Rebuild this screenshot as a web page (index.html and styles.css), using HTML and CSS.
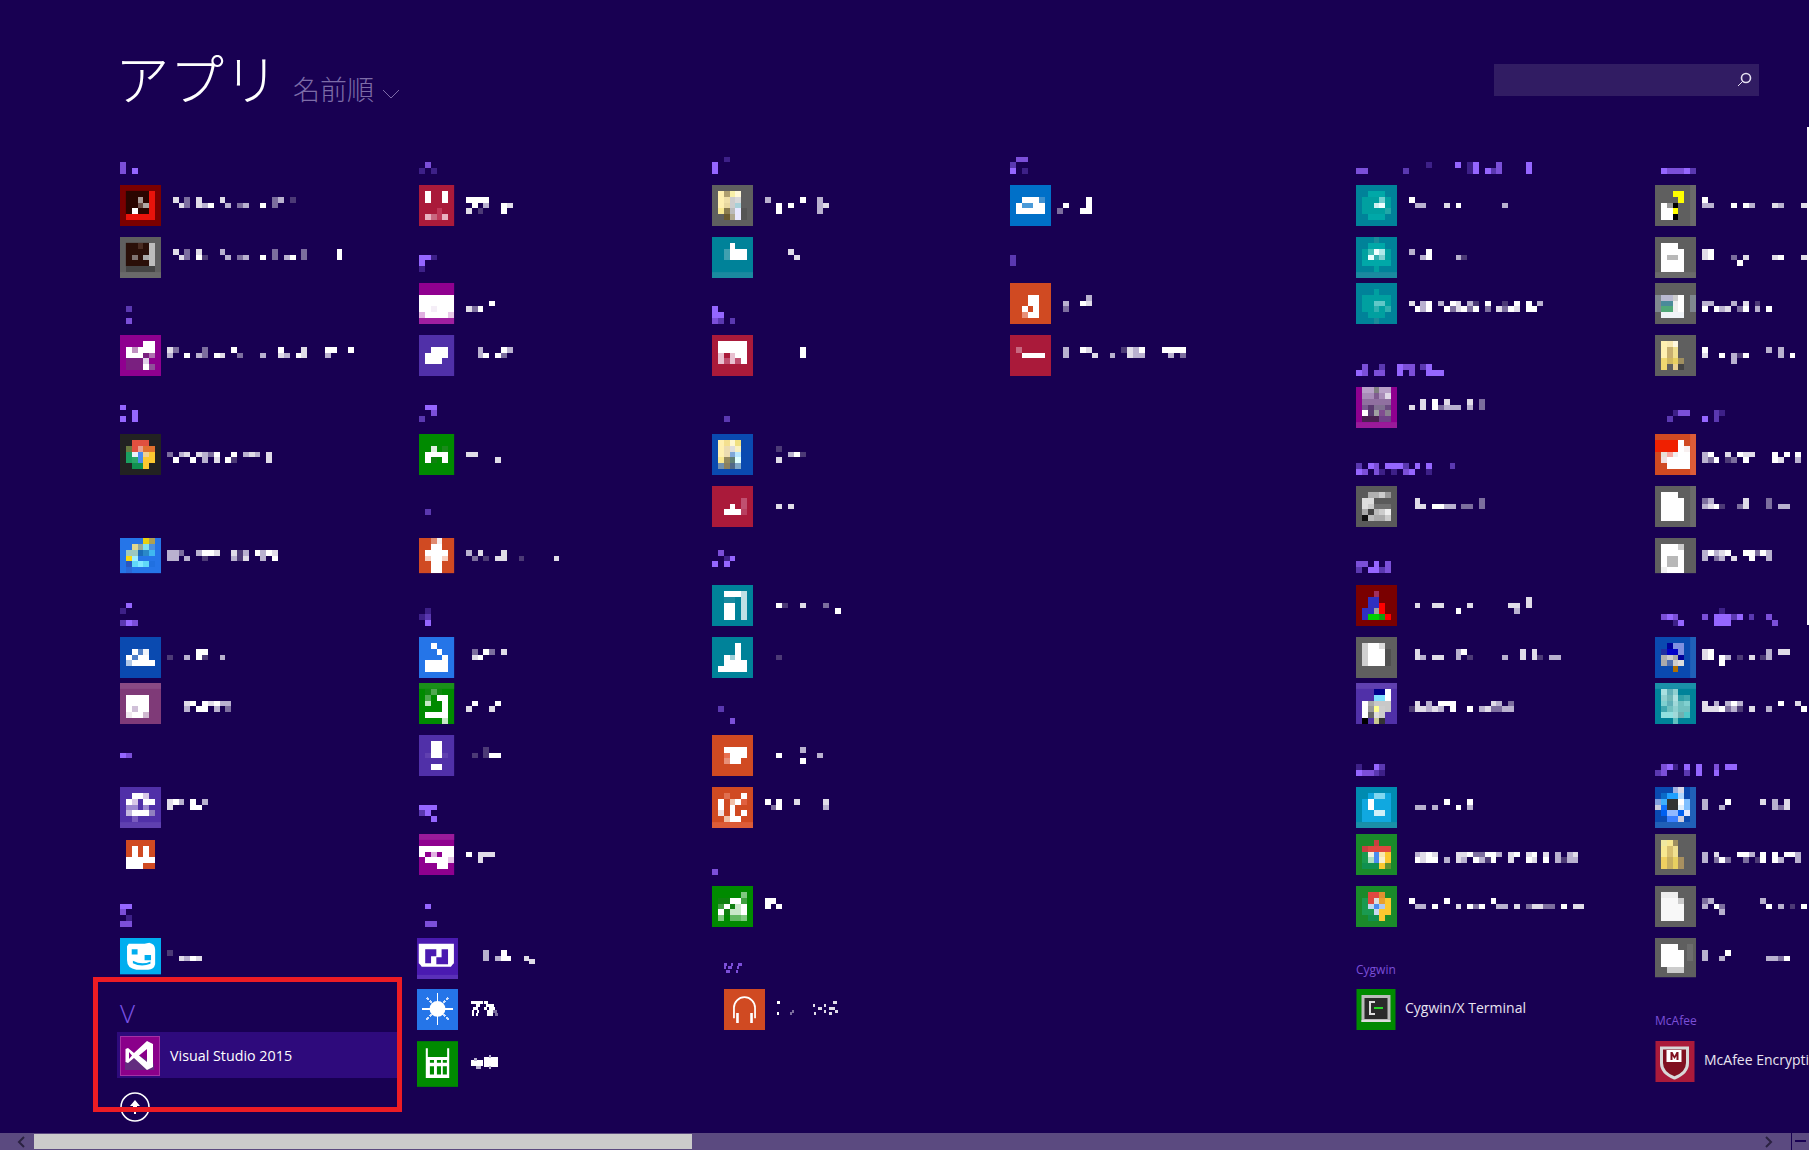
FILE: index.html
```html
<!DOCTYPE html>
<html lang="ja">
<head>
<meta charset="utf-8">
<title>アプリ</title>
<link rel="stylesheet" href="styles.css">
</head>
<body>
<div class="page">
<header class="top">
  <div class="heading">
    <h1 class="title">アプリ</h1>
    <span class="sort">名前順</span>
    <svg class="chev" viewBox="0 0 18 11"><path d="M1 1l8 8 8-8"/></svg>
  </div>
  <div class="search">
    <svg class="glass" viewBox="0 0 16 16"><circle cx="10" cy="6" r="4.5"/><path d="M6.8 9.2L1.5 14.5"/></svg>
  </div>
</header>

<main class="columns">

<!-- column 1 -->
<section class="col">
<svg class="hd" viewBox="0 0 40 7"><path class="h2" d="M0 4.5h1M0 5.5h1"/><path class="h1" d="M2 5.5h1"/></svg>
<div class="app">
  <svg class="tile" viewBox="0 0 7 7"><rect fill="#7a0000" width="7" height="7"/><rect fill="#2a0500" x="1" y="1" width="4" height="4"/><path stroke="#e8130b" d="M5.5 1v5M1 5.5h4"/><path stroke="#a89a96" d="M3 2.5h1"/><path stroke="#6d4f48" d="M3 3.5h1"/><path stroke="#b0a8a5" d="M4 3.5h1"/><path stroke="#fff" d="M2 4.5h1"/></svg>
  <svg class="name" viewBox="0 0 40 7"><path class="w" d="M8 3.5h1M17 3.5h1"/><path class="l" d="M2 2.5h1M3 3.5h1M6 2.5h1M6 3.5h1M10 2.5h1"/><path class="m" d="M7 3.5h1M11 3.5h1M14 3.5h1M20 2.5h1"/><path class="d" d="M4 2.5h1M4 3.5h1M13 3.5h1M19 2.5h1M19 3.5h1"/><path class="k" d="M22 2.5h1"/></svg>
</div>
<div class="app">
  <svg class="tile" viewBox="0 0 7 7"><rect fill="#5f5f5f" width="7" height="7"/><rect fill="#6a6a6a" y="6" width="7" height="1"/><rect fill="#2a0f08" x="1" y="1" width="4" height="4"/><path stroke="#bdbdbd" d="M5.5 1v4"/><path stroke="#444" d="M1 5.5h5"/><path stroke="#4a2c22" d="M3 1.5h1"/><path stroke="#7f7370" d="M2 3.5h1"/><path stroke="#aaa" d="M4 3.5h1"/></svg>
  <svg class="name" viewBox="0 0 40 7"><path class="w" d="M6 3.5h1M17 3.5h1M22 3.5h1M30 2.5h1M30 3.5h1"/><path class="l" d="M2 2.5h1M3 3.5h1M6 2.5h1"/><path class="m" d="M10 2.5h1M11 3.5h1M14 3.5h1M21 3.5h1"/><path class="d" d="M4 2.5h1M4 3.5h1M13 3.5h1M19 2.5h1M19 3.5h1M24 2.5h1M24 3.5h1"/><path class="k" d="M7 3.5h1"/></svg>
</div>
<svg class="hd" viewBox="0 0 40 7"><path class="h3" d="M1 4.5h1"/><path class="h2" d="M1 6.5h1"/></svg>
<div class="app">
  <svg class="tile" viewBox="0 0 7 7"><rect fill="#8f008f" width="7" height="7"/><path stroke="#fff" d="M4 1.5h2M1 2.5h1M3 2.5h3M1 3.5h3M4 5.5h1"/><path stroke="#c090c0" d="M2 2.5h1"/><path stroke="#7a2080" d="M4 3.5h1M1 4.5h3M1 5.5h3"/><path stroke="#b070b0" d="M5 3.5h1"/><path stroke="#e0d0e8" d="M4 4.5h1"/><path stroke="#90509a" d="M5 5.5h1"/></svg>
  <svg class="name" viewBox="0 0 40 7"><path class="w" d="M4 3.5h1M9 3.5h1M12 2.5h1M20 2.5h1M23 3.5h1M28 2.5h2M32 2.5h1"/><path class="l" d="M1 2.5h1M10 3.5h1M20 3.5h1M24 2.5h1M24 3.5h1"/><path class="m" d="M1 3.5h1M6 3.5h1M17 3.5h1M21 3.5h1M28 3.5h1"/><path class="d" d="M2 2.5h1M7 2.5h1M7 3.5h1M13 3.5h1"/></svg>
</div>
<svg class="hd" viewBox="0 0 40 7"><path class="h1" d="M0 3.5h1M0 5.5h1M2 4.5h1M2 5.5h1"/></svg>
<div class="app">
  <svg class="tile" viewBox="0 0 7 7"><rect fill="#222" width="7" height="7"/><path stroke="#e05040" d="M2 1.5h3M2 2.5h1"/><path stroke="#6a7a40" d="M1 2.5h1"/><path stroke="#e8a090" d="M3 2.5h1"/><path stroke="#e07030" d="M4 2.5h2"/><path stroke="#1aa060" d="M1 3.5h1M1 4.5h1"/><path stroke="#e8f0f8" d="M2 3.5h1"/><path stroke="#4a8cf0" d="M3 3.5h1M3 4.5h1"/><path stroke="#f0d090" d="M4 3.5h1"/><path stroke="#fcc830" d="M5 3.5h1M4 4.5h2M4 5.5h1"/><path stroke="#2aa868" d="M2 4.5h1"/><path stroke="#109050" d="M2 5.5h2"/></svg>
  <svg class="name" viewBox="0 0 40 7"><path class="w" d="M2 4.5h1M5 4.5h1M9 3.5h1M11 4.5h1M12 3.5h1"/><path class="l" d="M4 3.5h1M6 3.5h1M9 4.5h1M15 3.5h1M18 3.5h1M18 4.5h1"/><path class="m" d="M3 3.5h1M7 3.5h1M7 4.5h1M14 3.5h1M16 3.5h1"/><path class="d" d="M1 3.5h1M8 3.5h1"/><path class="k" d="M12 4.5h1"/></svg>
</div>
<div class="gap"></div>
<div class="app">
  <svg class="tile" viewBox="0 0 7 7"><rect fill="#2575e8" width="7" height="6"/><path stroke="#e8d010" d="M4 .5h1"/><path stroke="#b0a050" d="M5 .5h1"/><path stroke="#e0d890" d="M2 1.5h1"/><path stroke="#90a8a0" d="M3 1.5h1"/><path stroke="#80e0f0" d="M4 1.5h1"/><path stroke="#4a90e0" d="M5 1.5h1"/><path stroke="#9cc8c0" d="M1 2.5h2"/><path stroke="#1a6cb8" d="M3 2.5h1"/><path stroke="#2a88c8" d="M4 2.5h1"/><path stroke="#40b8f0" d="M5 2.5h1"/><path stroke="#f8d810" d="M1 3.5h1"/><path stroke="#9ff0ff" d="M2 3.5h1"/><path stroke="#2a58c0" d="M1 4.5h1"/><path stroke="#60d8f8" d="M2 4.5h1M4 4.5h1"/><path stroke="#80e8ff" d="M3 4.5h1"/><path stroke="#2070e0" d="M5 4.5h1"/><path stroke="#2a68d8" d="M1 5.5h1"/></svg>
  <svg class="name" viewBox="0 0 40 7"><path class="w" d="M7 2.5h2M16 2.5h1M18 2.5h1M19 3.5h1"/><path class="l" d="M9 2.5h1M12 2.5h1M14 3.5h1M19 2.5h1"/><path class="m" d="M1 2.5h2M1 3.5h2M4 3.5h1M6 2.5h1M12 3.5h1M14 2.5h1M17 2.5h1M17 3.5h1"/><path class="d" d="M3 2.5h1"/><path class="k" d="M7 3.5h1M13 2.5h1M13 3.5h1"/></svg>
</div>
<svg class="hd" viewBox="0 0 40 7"><path class="h1" d="M1 3.5h1M1 6.5h1"/><path class="h4" d="M0 4.5h1"/><path class="h3" d="M0 6.5h1"/><path class="h2" d="M2 6.5h1"/></svg>
<div class="app">
  <svg class="tile" viewBox="0 0 7 7"><rect fill="#0a4ab0" width="7" height="7"/><path stroke="#fff" d="M2 2.5h1M1 3.5h1M3 3.5h2M2 4.5h4"/><path stroke="#5080c8" d="M3 2.5h1M2 3.5h1"/><path stroke="#f0f4fa" d="M4 2.5h1"/><path stroke="#b0c8e8" d="M1 4.5h1"/></svg>
  <svg class="name" viewBox="0 0 40 7"><path class="w" d="M6 2.5h2M6 3.5h1"/><path class="m" d="M4 3.5h1M10 3.5h1"/><path class="k" d="M1 3.5h1M7 3.5h1"/></svg>
</div>
<div class="app">
  <svg class="tile" viewBox="0 0 7 7"><rect fill="#7f3a78" width="7" height="7"/><rect fill="#8a4a85" width="7" height="1"/><path stroke="#fff" d="M1 2.5h4M1 3.5h4M1 4.5h1M3 4.5h2M2 5.5h2"/><path stroke="#d0c0d8" d="M2 4.5h1"/><path stroke="#f0e8f0" d="M1 5.5h1"/><path stroke="#d0b8d0" d="M4 5.5h1"/></svg>
  <svg class="name" viewBox="0 0 40 7"><path class="w" d="M5 3.5h1M7 3.5h1M9 3.5h1M6 4.5h2"/><path class="l" d="M4 3.5h1M8 3.5h1"/><path class="m" d="M10 3.5h2M4 4.5h1M9 4.5h1"/><path class="d" d="M11 4.5h1"/></svg>
</div>
<svg class="hd" viewBox="0 0 40 7"><path class="h1" d="M0 3.5h1"/><path class="h2" d="M1 3.5h1"/></svg>
<div class="app">
  <svg class="tile" viewBox="0 0 7 7"><rect fill="#5030a8" width="7" height="7"/><rect fill="#5f40b0" y="6" width="7" height="1"/><path stroke="#fff" d="M2 1.5h2M1 2.5h1M4 2.5h2M2 4.5h3"/><path stroke="#d8c8e8" d="M4 1.5h1M2 2.5h1"/><path stroke="#9c88d0" d="M1 3.5h1M2 3.5h1M4 3.5h1"/><path stroke="#c4b8e0" d="M1 4.5h1"/><path stroke="#9080c0" d="M5 4.5h1"/><path stroke="#7a5cc0" d="M2 5.5h1"/></svg>
  <svg class="name" viewBox="0 0 40 7"><path class="w" d="M2 2.5h1M5 2.5h1M5 3.5h2"/><path class="l" d="M1 2.5h1M1 3.5h1"/><path class="m" d="M3 2.5h1M7 2.5h1"/></svg>
</div>
<div class="app">
  <svg class="tile" viewBox="0 0 7 7"><path stroke="#d04a22" d="M1 1.5h5M1 2.5h1M3 2.5h1M5 2.5h1M1 3.5h1M3 3.5h1M5 3.5h1M4 5.5h2"/><path stroke="#fff" d="M2 2.5h1M4 2.5h1M2 3.5h1M4 3.5h1M1 4.5h5M1 5.5h3"/></svg>
</div>
<svg class="hd" viewBox="0 0 40 7"><path class="h1" d="M0 3.5h2"/><path class="h2" d="M0 4.5h1M0 6.5h2"/><path class="h4" d="M1 5.5h1"/></svg>
<div class="app">
  <svg class="tile" viewBox="0 0 7 7"><rect fill="#00aeef" width="7" height="6.2"/><path fill="#fff" d="M1.5 1h2.7l.8-.2q1 .2 1 1.2v2.5q-.2.9-1.2.9H2.8q-1.6-.2-1.6-1.6V1.4z"/><path fill="#00aeef" d="M2 1.9h1v.9H2zM4.2 2.9h1.1v.9H4.2zM2.2 3.9q1.6.8 3 .1v.4q-1.6.6-3-.1z"/></svg>
  <svg class="name" viewBox="0 0 40 7"><path class="w" d="M5 3.5h1"/><path class="l" d="M3 3.5h1M6 3.5h1"/><path class="m" d="M4 3.5h1"/><path class="k" d="M1 2.5h1"/></svg>
</div>
<div class="vhead">V</div>
<div class="app selected">
  <svg class="vs" viewBox="0 0 40 40"><rect fill="#8a008a" stroke="#a532a5" x=".5" y=".5" width="39" height="39"/><path fill="#632c7f" d="M5 34V26L20 20 34 28V34z"/><path fill="#fff" fill-rule="evenodd" d="M27 5l6 3v23l-6 3-13-12-6 5-2.5-1V13L8 12l6 5zM27 13l-8 6.5L27 26zM9 16v7l3-3.5z"/></svg>
  <span class="vsname">Visual Studio 2015</span>
</div>
<div class="upcell">
  <svg class="up" viewBox="0 0 30 30"><circle cx="15" cy="15" r="14"/><path class="arrow" d="M15 8l5 6h-3v3h-4v-3h-3z"/><path class="stem" d="M15 19v3"/></svg>
</div>
</section>

<!-- column 2 -->
<section class="col">
<svg class="hd" viewBox="0 0 40 7"><path class="h2" d="M1 4.5h1"/><path class="h4" d="M0 5.5h1M2 5.5h1"/></svg>
<div class="app">
  <svg class="tile" viewBox="0 0 7 7"><rect fill="#aa1a3a" width="6" height="7"/><path stroke="#fff" d="M1 1.5h1M4 1.5h1M1 2.5h1M4 2.5h1"/><path stroke="#c03858" d="M3 4.5h1M3 5.5h1"/><path stroke="#e8b0c0" d="M1 5.5h1M4 5.5h1"/><path stroke="#c86880" d="M2 5.5h1"/></svg>
  <svg class="name" viewBox="0 0 40 7"><path class="w" d="M1 2.5h4M2 3.5h1M7 3.5h1M7 4.5h1"/><path class="l" d="M8 3.5h1M1 4.5h1"/><path class="m" d="M4 3.5h1"/><path class="k" d="M3 4.5h1"/></svg>
</div>
<svg class="hd" viewBox="0 0 40 7"><path class="h1" d="M0 3.5h2M0 4.5h1"/><path class="h4" d="M2 3.5h1M0 5.5h1"/></svg>
<div class="app">
  <svg class="tile" viewBox="0 0 7 7"><rect fill="#8f008f" width="6" height="7"/><path stroke="#fff" d="M0 2.5h6M0 3.5h6M0 4.5h6M1 5.5h4"/><path stroke="#e0b0e0" d="M0 5.5h1"/><path stroke="#e8c8e8" d="M5 5.5h1"/><path stroke="#f5eef7" d="M2 4.5h1"/><path stroke="#a01fa0" d="M0 6.5h6"/></svg>
  <svg class="name" viewBox="0 0 40 7"><path class="w" d="M5 3.5h1M3 4.5h1"/><path class="l" d="M1 4.5h1"/><path class="d" d="M2 4.5h1"/></svg>
</div>
<div class="app">
  <svg class="tile" viewBox="0 0 7 7"><rect fill="#5030a8" width="6" height="7"/><path stroke="#fff" d="M2 2.5h3M1 3.5h4M1 4.5h3"/></svg>
  <svg class="name" viewBox="0 0 40 7"><path class="w" d="M4 3.5h1M6 3.5h1M7 2.5h1"/><path class="m" d="M3 2.5h1M3 3.5h1M8 2.5h1"/><path class="d" d="M7 3.5h1"/></svg>
</div>
<svg class="hd" viewBox="0 0 40 7"><path class="h1" d="M1 3.5h2"/><path class="h2" d="M2 4.5h1"/><path class="h3" d="M0 5.5h1"/></svg>
<div class="app">
  <svg class="tile" viewBox="0 0 7 7"><rect fill="#008a00" width="6" height="7"/><path stroke="#e0f0e0" d="M2 2.5h1"/><path stroke="#1a8a1a" d="M4 2.5h1"/><path stroke="#fff" d="M1 3.5h4M1 4.5h1M4 4.5h1"/><path stroke="#108010" d="M2 4.5h1"/></svg>
  <svg class="name" viewBox="0 0 40 7"><path class="l" d="M1 3.5h2M6 4.5h1"/></svg>
</div>
<svg class="hd" viewBox="0 0 40 7"><path class="h3" d="M1 4.5h1"/></svg>
<div class="app">
  <svg class="tile" viewBox="0 0 7 7"><rect fill="#d04a22" width="6" height="6"/><path stroke="#e08a70" d="M2 .5h1"/><path stroke="#f8f0f0" d="M3 .5h1"/><path stroke="#fff" d="M2 1.5h2M1 2.5h4M2 3.5h2M2 4.5h2M2 5.5h2"/><path stroke="#f8d0c0" d="M1 3.5h1M4 3.5h1"/></svg>
  <svg class="name" viewBox="0 0 40 7"><path class="l" d="M3 2.5h1M7 2.5h1M6 3.5h2M16 3.5h1"/><path class="m" d="M1 2.5h1"/><path class="d" d="M2 3.5h1"/><path class="k" d="M4 3.5h1M10 3.5h1"/></svg>
</div>
<svg class="hd" viewBox="0 0 40 7"><path class="h4" d="M1 4.5h1M0 5.5h1"/><path class="h3" d="M1 5.5h1"/><path class="h1" d="M1 6.5h1"/></svg>
<div class="app">
  <svg class="tile" viewBox="0 0 7 7"><rect fill="#2575e8" width="6" height="7"/><path stroke="#fff" d="M2 1.5h1M3 2.5h1M4 3.5h1M1 4.5h4M1 5.5h4"/></svg>
  <svg class="name" viewBox="0 0 40 7"><path class="w" d="M4 2.5h1M3 3.5h1"/><path class="l" d="M2 3.5h1M7 2.5h1"/><path class="d" d="M2 2.5h1M5 2.5h1"/></svg>
</div>
<div class="app">
  <svg class="tile" viewBox="0 0 7 7"><rect fill="#008a00" width="6" height="7"/><rect fill="#1a901a" width="6" height="1"/><path stroke="#108810" d="M1 1.5h1M3 1.5h1"/><path stroke="#50a850" d="M2 1.5h1M1 2.5h1"/><path stroke="#fff" d="M3 2.5h2M4 3.5h1M4 4.5h1M1 5.5h4"/><path stroke="#c8e8c8" d="M1 3.5h1M4 6.5h1"/></svg>
  <svg class="name" viewBox="0 0 40 7"><path class="w" d="M2 3.5h1M6 3.5h1"/><path class="l" d="M1 4.5h1M5 4.5h1"/></svg>
</div>
<div class="app">
  <svg class="tile" viewBox="0 0 7 7"><rect fill="#5030a8" width="6" height="7"/><path stroke="#fff" d="M2 1.5h2M2 2.5h2M2 3.5h2M2 5.5h2"/><path stroke="#6040b0" d="M1 3.5h1M4 3.5h1"/></svg>
  <svg class="name" viewBox="0 0 40 7"><path class="w" d="M5 3.5h2"/><path class="k" d="M2 3.5h1M4 2.5h1M4 3.5h1"/></svg>
</div>
<svg class="hd" viewBox="0 0 40 7"><path class="h1" d="M0 3.5h3M1 4.5h1M2 5.5h1"/><path class="h3" d="M0 4.5h1"/></svg>
<div class="app">
  <svg class="tile" viewBox="0 0 7 7"><rect fill="#8f008f" width="6" height="7"/><rect fill="#9a1a9a" width="6" height="1"/><path stroke="#fff" d="M0 2.5h6M0 3.5h1M4 3.5h2M1 4.5h4M3 5.5h2"/><path stroke="#e0b0e0" d="M2 3.5h1"/><path stroke="#e8c8e8" d="M5 4.5h1"/></svg>
  <svg class="name" viewBox="0 0 40 7"><path class="w" d="M1 3.5h1"/><path class="l" d="M3 3.5h3M3 4.5h1"/></svg>
</div>
<svg class="hd" viewBox="0 0 40 7"><path class="h1" d="M1 3.5h1"/><path class="h2" d="M1 6.5h2"/></svg>
<div class="app shift">
  <svg class="tile" viewBox="0 0 7 7"><rect fill="#4a1ab0" width="7" height="7"/><rect fill="#5a30b8" y="6.3" width="7" height=".7"/><path fill="#fff" d="M.3 1h6v3.3l-.3.3-.2.3H.8l-.2-.3-.3-.3z"/><path fill="#4a1ab0" d="M1.4 1.9h1.9v1.2H2.4v1.2h-1zM4.2 1.9h1.1v2.6H3.3V3.3h.9z"/></svg>
  <svg class="name" viewBox="0 0 40 7"><path class="m" d="M4.3 2.5h1M4.3 3.5h1M6.3 3.5h1"/><path class="w" d="M7.3 2.5h1M7.3 3.5h1.700"/><path class="l" d="M11.200 3.500h1M12.200 4h1"/></svg>
</div>
<div class="app shift">
  <svg class="tile" viewBox="0 0 7 7"><rect fill="#2575e8" width="7" height="7"/><path class="ray" d="M3.5 .7v5.400M.9 3.400h5.200"/><path class="ray2" d="M1.600 1.500l3.800 3.800M5.400 1.500L1.600 5.300"/><circle cx="3.500" cy="3.400" r="1.350" fill="#fff"/></svg>
  <svg class="name" viewBox="0 0 40 7"><path class="w f" d="M2.200 2.300h2M3.100 2.800h.6M2.600 3.300h.8M2.400 3.800h.3M3.200 3.800h.4M2.400 4.300h.3M3.100 4.300h.4M4.500 2.300h.6M4.800 2.800h1.400M4.500 3.300h.5M5.300 3.300h1M5 3.800h1M5 4.300h1"/><path class="d f" d="M6 3.800h.6M6.300 4.300h.6"/></svg>
</div>
<div class="app shift">
  <svg class="tile tall" viewBox="0 0 7 7.800"><rect fill="#008a00" width="7" height="7.800"/><path fill="#fff" fill-rule="evenodd" d="M1.500 1.200h.35v1.500h3.300V1.200h.35v5.100h-4zM2.200 3.200v.5h.7v-.5zM3.400 3.200v.5h.7v-.5zM4.400 3.200v.5h.7v-.5zM2.200 4.300v1.400h.7V4.300zM3.400 4.300v1.400h.7V4.300zM4.400 4.300v1.400h.7V4.300z"/></svg>
  <svg class="name" viewBox="0 0 40 7"><path class="w" d="M2.200 3.700h2M4.500 3.300h2.300M4.500 3.900h2.300"/><path class="m f" d="M2.800 3.100h.4M5.300 2.700h.4M3 4.600h1M5.300 4.600h.4"/></svg>
</div>
</section>

<!-- column 3 -->
<section class="col">
<svg class="hd" viewBox="0 0 40 7"><path class="h4" d="M2 3.500h1"/><path class="h1" d="M0 4.500h1M0 5.500h1"/></svg>
<div class="app">
  <svg class="tile" viewBox="0 0 7 7"><rect fill="#5f5f5f" width="7" height="7"/><path stroke="#fff0b0" d="M1 1.500h1M1 2.500h1M1 3.500h1"/><path stroke="#b0a070" d="M2 1.500h1"/><path stroke="#f8f0a8" d="M3 1.500h1"/><path stroke="#fff8d8" d="M4 1.500h1"/><path stroke="#f0e0a8" d="M2 2.500h1"/><path stroke="#ccc" d="M3 2.500h1M3 3.500h1"/><path stroke="#d8d8d8" d="M4 2.500h1"/><path stroke="#e8d8a0" d="M2 3.500h1"/><path stroke="#a8d0d8" d="M4 3.500h1"/><path stroke="#f8e890" d="M1 4.500h1"/><path stroke="#8a7c50" d="M2 4.500h1"/><path stroke="#bbb" d="M3 4.500h1"/><path stroke="#e8e8ff" d="M4 4.500h1M4 5.500h1"/><path stroke="#555" d="M5 4.500h1M5 5.500h1"/><path stroke="#6a5a30" d="M2 5.500h1"/><path stroke="#b0a890" d="M3 5.500h1"/></svg>
  <svg class="name" viewBox="0 0 40 7"><path class="w" d="M4 3.500h1M4 4.500h1M6 3.500h1M8 2.500h1"/><path class="l" d="M12 3.500h1"/><path class="m" d="M2 2.500h1M11 2.500h1M11 3.500h1M11 4.500h1"/></svg>
</div>
<div class="app">
  <svg class="tile" viewBox="0 0 7 7"><rect fill="#008299" width="7" height="7"/><rect fill="#1a8aa0" y="6" width="7" height="1"/><path stroke="#fff" d="M3 1.500h1M3 2.500h3M3 3.500h3"/><path stroke="#40a0b0" d="M2 2.500h1M2 3.500h1"/></svg>
  <svg class="name" viewBox="0 0 40 7"><path class="l" d="M6 2.500h1M7 3.500h1"/></svg>
</div>
<svg class="hd" viewBox="0 0 40 7"><path class="h1" d="M0 4.500h1M0 5.500h2"/><path class="h2" d="M0 6.500h1"/><path class="h3" d="M1 6.500h1M3 6.500h1"/></svg>
<div class="app">
  <svg class="tile" viewBox="0 0 7 7"><rect fill="#aa1a3a" width="7" height="7"/><path stroke="#fff" d="M1 1.500h5M1 2.500h5M4 3.500h2M5 4.500h1"/><path stroke="#e8c0d0" d="M1 3.500h1M3 3.500h1M1 4.500h1M3 4.500h1"/><path stroke="#c05070" d="M2 4.500h1M4 4.500h1"/></svg>
  <svg class="name" viewBox="0 0 40 7"><path class="w" d="M8 2.500h1M8 3.500h1"/></svg>
</div>
<svg class="hd" viewBox="0 0 40 7"><path class="h3" d="M2 5.500h1"/></svg>
<div class="app">
  <svg class="tile" viewBox="0 0 7 7"><rect fill="#0a4ab0" width="7" height="7"/><path stroke="#fff0b0" d="M1 1.500h1M1 2.500h1M1 3.500h1"/><path stroke="#f4e090" d="M2 1.500h1"/><path stroke="#fff8d0" d="M3 1.500h1"/><path stroke="#f0e080" d="M4 1.500h1"/><path stroke="#ecdcb0" d="M2 2.500h1M2 3.500h1"/><path stroke="#ddd" d="M3 2.500h1"/><path stroke="#f8f0c0" d="M4 2.500h1"/><path stroke="#80a8d8" d="M3 3.500h1"/><path stroke="#b8e8ff" d="M4 3.500h1"/><path stroke="#f8e890" d="M1 4.500h1"/><path stroke="#948a60" d="M2 4.500h1"/><path stroke="#608078" d="M3 4.500h1"/><path stroke="#e0ffff" d="M4 4.500h1"/><path stroke="#7090b0" d="M1 5.500h1"/><path stroke="#8a8060" d="M2 5.500h1"/><path stroke="#506888" d="M3 5.500h1"/><path stroke="#80a8c8" d="M4 5.500h1"/></svg>
  <svg class="name" viewBox="0 0 40 7"><path class="w" d="M7 3.500h1"/><path class="l" d="M4 4.500h1"/><path class="m" d="M6 3.500h1"/><path class="k" d="M4 2.500h1M8 3.500h1"/></svg>
</div>
<div class="app">
  <svg class="tile" viewBox="0 0 7 7"><rect fill="#aa1a3a" width="7" height="7"/><path stroke="#c05070" d="M5 2.500h1M5 3.500h1"/><path stroke="#fff" d="M3 3.500h1M2 4.500h3"/><path stroke="#b84060" d="M5 4.500h1"/></svg>
  <svg class="name" viewBox="0 0 40 7"><path class="l" d="M4 3.500h1M6 3.500h1"/></svg>
</div>
<svg class="hd" viewBox="0 0 40 7"><path class="h2" d="M1 2.500h1"/><path class="h4" d="M2 3.500h1"/><path class="h1" d="M3 3.500h1M0 4.500h1M2 4.500h1"/></svg>
<div class="app">
  <svg class="tile" viewBox="0 0 7 7"><rect fill="#008299" width="7" height="7"/><path stroke="#fff" d="M2 1.500h3M2 3.500h2M2 4.500h2M2 5.500h2"/><path stroke="#c0e0e4" d="M5 1.500h1M5 2.500h1M5 3.500h1M5 4.500h1M5 5.500h1"/><path stroke="#1a8aa0" d="M2 2.500h2"/></svg>
  <svg class="name" viewBox="0 0 40 7"><path class="w" d="M4 3.500h1M14 4.500h1"/><path class="l" d="M8 3.500h1"/><path class="d" d="M12 3.500h1"/><path class="k" d="M5 3.500h1"/></svg>
</div>
<div class="app">
  <svg class="tile" viewBox="0 0 7 7"><rect fill="#008299" width="7" height="7"/><path stroke="#fff" d="M4 1.500h1M4 2.500h1M2 3.500h1M4 3.500h1M2 4.500h4M1 5.500h5"/><path stroke="#a0d0d8" d="M3 3.500h1"/></svg>
  <svg class="name" viewBox="0 0 40 7"><path class="k" d="M4 3.500h1"/></svg>
</div>
<svg class="hd" viewBox="0 0 40 7"><path class="h3" d="M1 4.500h1"/><path class="h2" d="M3 6.500h1"/></svg>
<div class="app">
  <svg class="tile" viewBox="0 0 7 7"><rect fill="#d04a22" width="7" height="7"/><path stroke="#fff" d="M2 2.500h4M3 3.500h3M3 4.500h2"/><path stroke="#e87050" d="M2 3.500h1"/><path stroke="#e89078" d="M2 4.500h1"/></svg>
  <svg class="name" viewBox="0 0 40 7"><path class="w" d="M4 3.500h1M8 4.500h1"/><path class="m" d="M8 2.500h1M11 3.500h1"/></svg>
</div>
<div class="app">
  <svg class="tile" viewBox="0 0 7 7"><rect fill="#d04a22" width="7" height="7"/><rect fill="#dc5c38" y="6" width="7" height="1"/><path stroke="#e07050" d="M2 1.500h1"/><path stroke="#fff" d="M5 1.500h1M1 2.500h1M4 2.500h1M1 3.500h1M3 3.500h1M3 4.500h1M5 4.500h1M3 5.500h2"/><path stroke="#f0c0a8" d="M3 2.500h1M2 5.500h1"/><path stroke="#e06040" d="M5 2.500h1"/><path stroke="#f0e0e0" d="M1 4.500h1"/></svg>
  <svg class="name" viewBox="0 0 40 7"><path class="w" d="M2 2.500h1M4 2.500h1M4 3.500h1"/><path class="l" d="M7 2.500h1M12 2.500h1"/><path class="m" d="M12 3.500h1"/><path class="d" d="M3 3.500h1"/></svg>
</div>
<svg class="hd" viewBox="0 0 40 7"><path class="h2" d="M0 6.500h1"/></svg>
<div class="app">
  <svg class="tile" viewBox="0 0 7 7"><rect fill="#008a00" width="7" height="7"/><path stroke="#80c880" d="M5 1.500h1M1 5.500h1M5 5.500h1"/><path stroke="#108010" d="M1 2.500h2M3 3.500h1M2 4.500h1"/><path stroke="#fff" d="M3 2.500h2M2 3.500h1M5 3.500h1M1 4.500h1M5 4.500h1"/><path stroke="#40a040" d="M5 2.500h1M1 3.500h1"/><path stroke="#c8e8c8" d="M4 3.500h1M4 4.500h1M3 4.500h1"/><path stroke="#60b860" d="M3 5.500h2"/></svg>
  <svg class="name" viewBox="0 0 40 7"><path class="w" d="M2 2.500h2M2 3.500h1M4 3.500h1"/></svg>
</div>
<svg class="hd" viewBox="0 0 40 7"><path class="h2 f" d="M2 4.600h.5M3.200 4.600h.4M2.100 5.100h.3M2.800 5.100h.6M2.400 5.700h.6M4.400 4.600h.8M4.200 5.100h.4M4.100 5.700h.4"/></svg>
<div class="app shift-r">
  <svg class="tile" viewBox="0 0 7 7"><rect fill="#d04a22" width="7" height="7"/><path class="phone" d="M1.700 5V3.200a1.800 1.800 0 013.600 0V5"/><path class="cup" d="M2.300 4.100v1.700M4.700 4.100v1.700"/></svg>
  <svg class="name" viewBox="0 0 40 7"><path class="w f" d="M2 2.300h.6M2 4.200h.4"/><path class="d f" d="M4.300 4.200h.4M4.700 3.800h.3"/><path class="l f" d="M8.200 2.800h.4M9 3.300h.8M10 2.800h.5M11 3.300h.9M8.400 4.200h.4M10 3.800h.5M11.700 2.300h.6M12 3.800h.5M11 4.200h.4"/></svg>
</div>
</section>

<!-- column 4 -->
<section class="col">
<svg class="hd" viewBox="0 0 40 7"><path class="h2" d="M1 3.500h2"/><path class="h3" d="M0 4.500h1"/><path class="h1" d="M0 5.500h1"/><path class="h4" d="M2 5.500h1"/></svg>
<div class="app">
  <svg class="tile" viewBox="0 0 7 7"><rect fill="#0070c8" width="7" height="7"/><path stroke="#fff" d="M2 2.500h3M1 3.500h1M4 3.500h2M1 4.500h5"/><path stroke="#4090d0" d="M5 2.500h1"/><path stroke="#4a9ad8" d="M2 3.500h2"/></svg>
  <svg class="name" viewBox="0 0 40 7"><path class="w" d="M2 3.500h1M6 2.500h1M6 3.500h1M5 4.500h2"/><path class="d" d="M1 4.500h1"/></svg>
</div>
<svg class="hd" viewBox="0 0 40 7"><path class="h3" d="M0 3.500h1M0 4.500h1"/></svg>
<div class="app">
  <svg class="tile" viewBox="0 0 7 7"><rect fill="#d04a22" width="7" height="7"/><path stroke="#fff" d="M3 2.500h2M3 3.500h2M2 4.500h1M4 4.500h1M3 5.500h2"/><path stroke="#e89078" d="M2 5.500h1"/></svg>
  <svg class="name" viewBox="0 0 40 7"><path class="w" d="M5 3.500h1"/><path class="l" d="M6 3.500h1"/><path class="m" d="M6 2.500h1M2 3.500h1"/><path class="d" d="M2 4.500h1"/></svg>
</div>
<div class="app">
  <svg class="tile" viewBox="0 0 7 7"><rect fill="#aa1a3a" width="7" height="7"/><path stroke="#c86880" d="M1 2.500h1"/><path stroke="#fff" d="M2 3.500h4"/></svg>
  <svg class="name" viewBox="0 0 40 7"><path class="w" d="M5 2.500h1M15 2.500h1M19 2.500h4"/><path class="l" d="M6 2.500h1M7 3.500h1M13 2.500h1M13 3.500h1"/><path class="m" d="M2 2.500h1M2 3.500h1M10 3.500h1M14 2.500h1M14 3.500h2M20 3.500h1"/><path class="k" d="M12 2.500h1"/><path class="d" d="M22 3.500h1"/></svg>
</div>
</section>

<!-- column 5 -->
<section class="col">
<svg class="hd" viewBox="0 0 40 7"><path class="h2" d="M0 5.500h2M24 4.500h1M24 5.500h1"/><path class="h3" d="M8 5.500h1M23 5.500h1"/><path class="h4" d="M12 4.500h1M19 4.500h1M19 5.500h1"/><path class="h1" d="M17 4.500h1M20 4.500h1M20 5.500h1M22 5.500h1M29 4.500h1M29 5.500h1"/></svg>
<div class="app">
  <svg class="tile" viewBox="0 0 7 7"><rect fill="#008299" width="7" height="7"/><path stroke="#00a8a8" d="M2 1.500h3M2 5.500h3"/><path stroke="#00a0a0" d="M1 2.500h3M5 2.500h1M1 3.500h2M5 3.500h1M1 4.500h4"/><path stroke="#70d0d0" d="M4 2.500h1"/><path stroke="#d0f0f0" d="M3 3.500h1"/><path stroke="#f0ffff" d="M4 3.500h1"/><path stroke="#20a8a8" d="M5 4.500h1"/></svg>
  <svg class="name" viewBox="0 0 40 7"><path class="w" d="M2 2.500h1M10 3.500h1"/><path class="l" d="M8 3.500h1"/><path class="m" d="M3 3.500h2M18 3.500h1"/></svg>
</div>
<div class="app">
  <svg class="tile" viewBox="0 0 7 7"><rect fill="#008299" width="7" height="7"/><rect fill="#1a8aa0" y="6" width="7" height="1"/><path stroke="#1a8a9a" d="M3 .5h1"/><path stroke="#00a8a8" d="M2 1.500h3M1 4.500h5"/><path stroke="#00a0a0" d="M1 2.500h1M5 2.500h1M1 3.500h1M5 3.500h1M3 5.500h1"/><path stroke="#40c0b8" d="M2 2.500h1"/><path stroke="#f0ffff" d="M3 2.500h1"/><path stroke="#b0e8e8" d="M4 2.500h1"/><path stroke="#e8ffff" d="M2 3.500h1"/><path stroke="#30b0b0" d="M3 3.500h1"/><path stroke="#80d0d0" d="M4 3.500h1"/></svg>
  <svg class="name" viewBox="0 0 40 7"><path class="w" d="M5 2.500h1M5 3.500h1"/><path class="m" d="M2 2.500h1M4 3.500h1M10 3.500h1"/><path class="k" d="M11 3.500h1"/></svg>
</div>
<div class="app">
  <svg class="tile" viewBox="0 0 7 7"><rect fill="#008299" width="7" height="7"/><path stroke="#00a0a0" d="M3 1.500h1M1 2.500h5M1 3.500h2M5 3.500h1M1 4.500h2M4 4.500h1M2 5.500h3"/><path stroke="#60c8c8" d="M3 3.500h2"/><path stroke="#30b0b0" d="M3 4.500h1M5 4.500h1"/><path stroke="#1a8a9a" d="M3 6.500h1"/></svg>
  <svg class="name" viewBox="0 0 40 7"><path class="w" d="M3 4.500h1M5 3.500h1M5 4.500h1M8 4.500h1M9 3.500h1M11 4.500h1M13 4.500h1M15 3.500h1M19 4.500h1M20 3.500h1M22 3.500h1M22 4.500h2"/><path class="l" d="M2 3.500h1M10 3.500h1M10 4.500h1M17 4.500h1M20 4.500h1"/><path class="m" d="M4 3.500h1M4 4.500h1M7 3.500h1M12 3.500h1M24 3.500h1"/><path class="d" d="M9 4.500h1M12 4.500h1M15 4.500h1M18 4.500h1"/><path class="k" d="M13 3.500h1M18 3.500h1"/></svg>
</div>
<svg class="hd" viewBox="0 0 40 7"><path class="h2" d="M1 5.500h1M8 5.500h2M1 6.500h1M3 6.500h2M9 6.500h1"/><path class="h3" d="M4 5.500h1M11 5.500h1"/><path class="h1" d="M7 5.500h1M12 5.500h1M0 6.500h1M7 6.500h1M12 6.500h3"/></svg>
<div class="app">
  <svg class="tile" viewBox="0 0 7 7"><rect fill="#8f008f" width="7" height="7"/><rect fill="#9a1a9a" y="6" width="7" height="1"/><path stroke="#b8a0c8" d="M1 .5h2M4 .5h2"/><path stroke="#808080" d="M3 .5h1"/><path stroke="#a88cb8" d="M1 1.500h2M4 1.500h1"/><path stroke="#805c90" d="M3 1.500h1"/><path stroke="#e0d8e8" d="M5 1.500h1"/><path stroke="#9070a0" d="M1 2.500h5"/><path stroke="#7a5a90" d="M1 3.500h1"/><path stroke="#5a3a70" d="M2 3.500h1M2 4.500h1"/><path stroke="#807090" d="M3 3.500h2"/><path stroke="#6a4a80" d="M5 3.500h1"/><path stroke="#fff" d="M1 4.500h1"/><path stroke="#a0a0a0" d="M3 4.500h1"/><path stroke="#804c90" d="M4 4.500h1"/><path stroke="#8a8090" d="M5 4.500h1"/><path stroke="#4a2050" d="M1 5.500h3"/><path stroke="#704088" d="M4 5.500h2"/></svg>
  <svg class="name" viewBox="0 0 40 7"><path class="w" d="M6 2.500h1M6 3.500h1"/><path class="l" d="M2 3.500h1M4 2.500h1M4 3.500h1M8 2.500h1M12 2.500h1"/><path class="m" d="M8 3.500h3M12 3.500h1"/><path class="d" d="M7 3.500h1M14 2.500h1M14 3.500h1"/></svg>
</div>
<svg class="hd" viewBox="0 0 40 7"><path class="h3" d="M0 5.500h1M8 5.500h1M16 5.500h1"/><path class="h1" d="M2 5.500h1M5 5.500h3M10 5.500h1M12 5.500h1M0 6.500h1M9 6.500h1"/><path class="h2" d="M3 5.500h1M1 6.500h1M3 6.500h1M8 6.500h1"/><path class="h4" d="M4 6.500h1M6 6.500h1M12 6.500h1"/></svg>
<div class="app">
  <svg class="tile" viewBox="0 0 7 7"><rect fill="#5a5a5a" width="7" height="7"/><path stroke="#b0b0b0" d="M2 1.500h2"/><path stroke="#ccc" d="M4 1.500h1M2 3.500h1M4 4.500h1M5 5.500h1"/><path stroke="#999" d="M5 1.500h1"/><path stroke="#ddd" d="M1 2.500h2M1 3.500h1"/><path stroke="#707070" d="M3 3.500h3"/><path stroke="#aaa" d="M1 4.500h1M3 5.500h2"/><path stroke="#444" d="M2 4.500h1"/><path stroke="#bbb" d="M3 4.500h1M2 5.500h1"/><path stroke="#eee" d="M5 4.500h1"/><path stroke="#111" d="M1 5.500h1"/></svg>
  <svg class="name" viewBox="0 0 40 7"><path class="w" d="M6 3.500h2"/><path class="l" d="M3 2.500h1M3 3.500h2"/><path class="m" d="M8 3.500h2"/><path class="d" d="M11 3.500h2M14 2.500h1M14 3.500h1"/></svg>
</div>
<svg class="hd" viewBox="0 0 40 7"><path class="h2" d="M0 4.500h2M5 4.500h1M5 5.500h1"/><path class="h3" d="M0 5.500h1M4 5.500h1"/><path class="h1" d="M3 4.500h1M2 5.500h2"/></svg>
<div class="app">
  <svg class="tile" viewBox="0 0 7 7"><rect fill="#7a0000" width="7" height="7"/><path stroke="#a03060" d="M3 1.500h1"/><path stroke="#3030c0" d="M2 2.500h2M2 3.500h2M1 4.500h2M1 5.500h1"/><path stroke="#f00" d="M4 3.500h1M4 4.500h1M5 5.500h1"/><path stroke="#a0a0a0" d="M3 4.500h1"/><path stroke="#00d000" d="M2 5.500h2"/><path stroke="#10a010" d="M4 5.500h1"/></svg>
  <svg class="name" viewBox="0 0 40 7"><path class="w" d="M10 4.500h1"/><path class="l" d="M3 3.500h1M6 3.500h2M12 3.500h1M19 3.500h2M22 2.500h1M22 3.500h1"/><path class="m" d="M20 4.500h1"/></svg>
</div>
<div class="app">
  <svg class="tile" viewBox="0 0 7 7"><rect fill="#5f5f5f" width="7" height="7"/><path stroke="#505050" d="M5 2.500h1M5 3.500h1M5 4.500h1"/><path stroke="#d0d0d0" d="M1 1.500h1M1 2.500h1M1 3.500h1M1 4.500h1"/><path stroke="#fff" d="M2 1.500h2M2 2.500h3M2 3.500h3M2 4.500h3"/><path stroke="#ddd" d="M4 1.500h1"/></svg>
  <svg class="name" viewBox="0 0 40 7"><path class="w" d="M11 2.500h1"/><path class="l" d="M3 2.500h1M3 3.500h1M6 3.500h2M21 2.500h1M21 3.500h1M23 2.500h1M23 3.500h1"/><path class="m" d="M4 3.500h1M10 2.500h1M10 3.500h1M18 3.500h1M26 3.500h2"/><path class="k" d="M12 3.500h1M24 3.500h1"/></svg>
</div>
<div class="app">
  <svg class="tile" viewBox="0 0 7 7"><rect fill="#5030a8" width="7" height="7"/><rect fill="#6040b0" width="7" height="1"/><path stroke="#00008a" d="M3 1.500h2"/><path stroke="#fff" d="M5 1.500h1M5 2.500h1M1 3.500h1M1 4.500h1M1 5.500h1"/><path stroke="#80e0ff" d="M3 2.500h2"/><path stroke="#aaa" d="M2 3.500h1"/><path stroke="#c8c8c8" d="M3 3.500h3M5 4.500h1"/><path stroke="#999" d="M2 4.500h1"/><path stroke="#ffff90" d="M3 4.500h1"/><path stroke="#ccc" d="M4 4.500h1M4 5.500h1"/><path stroke="#666" d="M2 5.500h1"/><path stroke="#ddd" d="M3 5.500h1"/><path stroke="#000" d="M1 6.500h1"/><path stroke="#c8c890" d="M3 6.500h1"/><path stroke="#333" d="M4 6.500h1"/></svg>
  <svg class="name" viewBox="0 0 40 7"><path class="w" d="M7 3.500h3M9 4.500h1M12 4.500h1"/><path class="l" d="M3 3.500h1M3 4.500h2M6 4.500h1M15 4.500h1M16 3.500h1"/><path class="m" d="M5 3.500h1M5 4.500h1M7 4.500h1M14 4.500h1M17 3.500h1M18 4.500h2"/><path class="d" d="M16 4.500h2M19 3.500h1"/><path class="k" d="M2 4.500h1"/></svg>
</div>
<svg class="hd" viewBox="0 0 40 7"><path class="h4" d="M0 5.500h1M4 6.500h1"/><path class="h1" d="M3 5.500h1M0 6.500h1"/><path class="h3" d="M4 5.500h1M3 6.500h1"/><path class="h2" d="M1 6.500h2"/></svg>
<div class="app">
  <svg class="tile" viewBox="0 0 7 7"><rect fill="#008bb0" width="7" height="7"/><rect fill="#1a90a8" y="6" width="7" height="1"/><path stroke="#10a8e0" d="M2 1.500h1M5 1.500h1M1 2.500h1M3 2.500h3M1 3.500h1M3 3.500h3M1 4.500h2M5 4.500h1M1 5.500h5"/><path stroke="#80d8f0" d="M3 1.500h2"/><path stroke="#fff" d="M2 2.500h1M2 3.500h1"/><path stroke="#d0f0f8" d="M3 4.500h2"/></svg>
  <svg class="name" viewBox="0 0 40 7"><path class="w" d="M8 2.500h1M10 3.500h1M12 2.500h1"/><path class="m" d="M3 3.500h2M6 3.500h1M12 3.500h1"/></svg>
</div>
<div class="app">
  <svg class="tile" viewBox="0 0 7 7"><rect fill="#1a8a2a" width="7" height="7"/><path stroke="#c84040" d="M3 1.500h1M1 2.500h1"/><path stroke="#e04840" d="M2 2.500h4"/><path stroke="#1a9a50" d="M1 3.500h1M1 4.500h1"/><path stroke="#f0f0e0" d="M2 3.500h1"/><path stroke="#4a8cf0" d="M3 3.500h1M3 4.500h1"/><path stroke="#f8e8b0" d="M4 3.500h1"/><path stroke="#fcc830" d="M5 3.500h1M5 4.500h1M4 5.500h1"/><path stroke="#b0e0c0" d="M2 4.500h1"/><path stroke="#f8f0d0" d="M4 4.500h1"/><path stroke="#109050" d="M1 5.500h3"/><path stroke="#609030" d="M5 5.500h1"/></svg>
  <svg class="name" viewBox="0 0 40 7"><path class="w" d="M5 3.500h1M12 3.500h1M15 3.500h2M20 3.500h1M23 3.500h1M3 4.500h1M5 4.500h1M6 4.500h1M13 4.500h1M16 4.500h1M22 4.500h1M25 4.500h1"/><path class="l" d="M4 3.500h1M6 3.500h1M10 3.500h2M19 3.500h1M22 3.500h1M25 3.500h1M30 3.500h1M4 4.500h1M10 4.500h1M19 4.500h1M23 4.500h1"/><path class="m" d="M3 3.500h1M17 3.500h1M27 3.500h1M29 3.500h1M8 4.500h1M11 4.500h1M14 4.500h1M27 4.500h1M29 4.500h2"/><path class="d" d="M13 3.500h2"/><path class="k" d="M15 4.500h1M28 4.500h1"/></svg>
</div>
<div class="app">
  <svg class="tile" viewBox="0 0 7 7"><rect fill="#1a8a2a" width="7" height="7"/><path stroke="#e04840" d="M2 1.500h2M2 2.500h1"/><path stroke="#e09030" d="M4 1.500h1"/><path stroke="#1a9a50" d="M1 2.500h1M1 3.500h1M1 4.500h2"/><path stroke="#ddd" d="M3 2.500h1"/><path stroke="#e8a030" d="M4 2.500h1"/><path stroke="#fcc830" d="M5 2.500h1M5 3.500h1M4 4.500h2M4 5.500h1"/><path stroke="#c0d8f0" d="M2 3.500h1"/><path stroke="#4a8cf0" d="M3 3.500h1"/><path stroke="#b0c8f0" d="M4 3.500h1"/><path stroke="#c8d8f0" d="M3 4.500h1"/><path stroke="#109050" d="M2 5.500h2"/></svg>
  <svg class="name" viewBox="0 0 40 7"><path class="w" d="M2 2.500h1M8 2.500h1M16 2.500h1M6 3.500h1M12 3.500h1M14 3.500h1M28 3.500h1"/><path class="l" d="M10 3.500h1M20 3.500h1M23 3.500h2M30 3.500h2"/><path class="m" d="M3 3.500h2M17 3.500h2"/><path class="d" d="M13 3.500h1M22 3.500h1M25 3.500h2"/></svg>
</div>
<div class="grp">Cygwin</div>
<div class="app">
  <svg class="tile" viewBox="0 0 40 41"><rect fill="#008a00" width="39" height="41"/><rect fill="#bbb" x="5" y="6" width="29" height="27"/><rect fill="#2a2a2a" x="8" y="9" width="23" height="21"/><path class="term" d="M18 13h-5v12h5"/><path class="termg" d="M17 19h9"/><rect fill="#ddd" x="5" y="31" width="29" height="2"/></svg>
  <span class="label">Cygwin/X Terminal</span>
</div>
</section>

<!-- column 6 -->
<section class="col">
<svg class="hd" viewBox="0 0 40 7"><path class="h1" d="M1 5.500h1M5 5.500h1"/><path class="h2" d="M2 5.500h3"/><path class="h3" d="M6 5.500h1"/></svg>
<div class="app">
  <svg class="tile" viewBox="0 0 7 7"><rect fill="#5f5f5f" width="7" height="7"/><rect fill="#6a6a6a" x="6" width="1" height="7"/><path stroke="#ff0" d="M3 1.500h2M4 2.500h1M3 4.500h1"/><path stroke="#fff" d="M1 3.500h1M1 4.500h2M1 5.500h2"/><path stroke="#999" d="M2 3.500h1"/><path stroke="#000" d="M3 3.500h1M3 5.500h1"/></svg>
  <svg class="name" viewBox="0 0 40 7"><path class="w" d="M1 2.500h1M6 3.500h1M8 3.500h1"/><path class="l" d="M13 3.500h1M18 3.500h1"/><path class="m" d="M1 3.500h2M9 3.500h1M14 3.500h1"/></svg>
</div>
<div class="app">
  <svg class="tile" viewBox="0 0 7 7"><rect fill="#5f5f5f" width="7" height="7"/><rect fill="#6a6a6a" y="6" width="7" height="1"/><path stroke="#fff" d="M1 1.500h3M1 2.500h4M1 3.500h1M4 3.500h1M1 4.500h4M1 5.500h4"/><path stroke="#b8b8b8" d="M2 3.500h2"/></svg>
  <svg class="name" viewBox="0 0 40 7"><path class="w" d="M2 2.500h1M2 3.500h1M7 4.500h1M14 3.500h1"/><path class="l" d="M1 2.500h1M1 3.500h1M8 3.500h1M13 3.500h1M18 3.500h1"/><path class="d" d="M6 3.500h1"/></svg>
</div>
<div class="app">
  <svg class="tile" viewBox="0 0 7 7"><rect fill="#5f5f5f" width="7" height="7"/><path stroke="#808890" d="M0 2.500h1M0 3.500h1M0 4.500h1M6 2.500h1M6 3.500h1M6 4.500h1"/><path stroke="#b8b8d0" d="M1 2.500h2"/><path stroke="#ccc" d="M3 2.500h1"/><path stroke="#fff" d="M4 2.500h1M4 3.500h1M4 4.500h1"/><path stroke="#4a8a9a" d="M1 3.500h2"/><path stroke="#eee" d="M3 3.500h1M3 4.500h1"/><path stroke="#50a878" d="M1 4.500h2"/><path stroke="#f0f4f8" d="M1 5.500h4"/></svg>
  <svg class="name" viewBox="0 0 40 7"><path class="w" d="M1 4.500h1M3 4.500h1M8 4.500h1M12 4.500h1"/><path class="l" d="M5 4.500h1M8 3.500h1"/><path class="m" d="M1 3.500h2M4 4.500h1M6 3.500h1M10 4.500h1"/><path class="d" d="M7 4.500h1"/><path class="k" d="M10 3.500h1"/></svg>
</div>
<div class="app">
  <svg class="tile" viewBox="0 0 7 7"><rect fill="#5f5f5f" width="7" height="7"/><path stroke="#fff0b0" d="M1 1.500h1M1 2.500h1M1 3.500h1"/><path stroke="#f8e8b0" d="M2 1.500h1"/><path stroke="#fff8e0" d="M3 1.500h1"/><path stroke="#c8b070" d="M2 2.500h1M2 3.500h1"/><path stroke="#f0e090" d="M3 2.500h1M3 3.500h1"/><path stroke="#f0d870" d="M1 4.500h1M1 5.500h1"/><path stroke="#d0b860" d="M2 4.500h1"/><path stroke="#e8d060" d="M3 4.500h1"/><path stroke="#a09060" d="M4 4.500h1"/><path stroke="#e8d090" d="M3 5.500h1"/><path stroke="#444" d="M4 5.500h1"/></svg>
  <svg class="name" viewBox="0 0 40 7"><path class="w" d="M1 2.500h1M4 3.500h1M8 3.500h1M16 3.500h1"/><path class="l" d="M1 3.500h1"/><path class="m" d="M6 3.500h1M6 4.500h1M12 2.500h1M14 2.500h1M14 3.500h1"/><path class="k" d="M7 3.500h1"/></svg>
</div>
<svg class="hd" viewBox="0 0 40 7"><path class="h4" d="M3 4.500h1M11 4.500h1"/><path class="h2" d="M4 4.500h2"/><path class="h3" d="M10 4.500h1M2 5.500h1M10 5.500h1"/><path class="h1" d="M8 5.500h1"/></svg>
<div class="app">
  <svg class="tile" viewBox="0 0 7 7"><rect fill="#d04a22" width="7" height="7"/><rect fill="#dc5c38" x="6" width="1" height="7"/><path stroke="#f02000" d="M0 1.500h4M0 2.500h4"/><path stroke="#fff" d="M4 1.500h1M4 2.500h1M4 3.500h2M2 4.500h4M2 5.500h4"/><path stroke="#f8f0f0" d="M5 2.500h1"/><path stroke="#e8e0d8" d="M1 3.500h1"/><path stroke="#f8a8a0" d="M2 3.500h1"/><path stroke="#f0f0f0" d="M3 3.500h1"/><path stroke="#f0e0e0" d="M1 4.500h1"/></svg>
  <svg class="name" viewBox="0 0 40 7"><path class="w" d="M2 3.500h1M3 4.500h1M7 3.500h1M8 4.500h1M13 3.500h1M13 4.500h1M15 3.500h1M17 3.500h1"/><path class="l" d="M5 3.500h1M8 3.500h1M9 3.500h1M14 4.500h1"/><path class="m" d="M1 3.500h1M1 4.500h1M17 4.500h1"/><path class="d" d="M2 4.500h1M6 4.500h1"/><path class="k" d="M5 4.500h1"/></svg>
</div>
<div class="app">
  <svg class="tile" viewBox="0 0 7 7"><rect fill="#5f5f5f" width="7" height="7"/><rect fill="#6a6a6a" x="6" width="1" height="7"/><path stroke="#fff" d="M1 1.500h3M1 2.500h4M1 3.500h4M1 4.500h4M1 5.500h4"/></svg>
  <svg class="name" viewBox="0 0 40 7"><path class="w" d="M3 3.500h1"/><path class="l" d="M2 3.500h1M8 2.500h1M8 3.500h1"/><path class="m" d="M2 2.500h1M1 3.500h1M14 3.500h2"/><path class="d" d="M1 2.500h1M7 3.500h1M12 2.500h1M12 3.500h1"/><path class="k" d="M4 3.500h1"/></svg>
</div>
<div class="app">
  <svg class="tile" viewBox="0 0 7 7"><rect fill="#5f5f5f" width="7" height="6"/><path stroke="#fff" d="M1 1.500h3M1 2.500h4M1 3.500h1M4 3.500h1M1 4.500h1M4 4.500h1M2 5.500h3"/><path stroke="#ccc" d="M4 1.500h1"/><path stroke="#b8b8b8" d="M2 3.500h2M2 4.500h2"/><path stroke="#f0f0f0" d="M1 5.500h1"/></svg>
  <svg class="name" viewBox="0 0 40 7"><path class="w" d="M2 2.500h1M5 2.500h1M8 2.500h2M11 2.500h1M9 3.500h1"/><path class="l" d="M4 2.500h1M6 3.500h1"/><path class="m" d="M1 2.500h1M3 2.500h1M12 2.500h1M1 3.500h1M4 3.500h1M12 3.500h1"/><path class="d" d="M3 3.500h1M10 2.500h1"/></svg>
</div>
<svg class="hd" viewBox="0 0 40 7"><path class="h4" d="M11 4.500h1"/><path class="h2" d="M1 5.500h1M3 5.500h1M8 5.500h1M19 5.500h1M20 6.500h1"/><path class="h1" d="M2 5.500h1M4 6.500h1M10 5.500h3M14 5.500h1M10 6.500h3"/><path class="h3" d="M13 5.500h1M16 5.500h1"/><path class="h4" d="M3 6.500h1"/></svg>
<div class="app">
  <svg class="tile" viewBox="0 0 7 7"><rect fill="#0a4ab0" width="7" height="7"/><rect fill="#2060b8" x="6" width="1" height="7"/><path stroke="#00009a" d="M2 1.500h1M4 3.500h1"/><path stroke="#8090e0" d="M3 1.500h2M4 2.500h1"/><path stroke="#2030a0" d="M1 2.500h1"/><path stroke="#0000c8" d="M2 2.500h2"/><path stroke="#b0b0b0" d="M1 3.500h1"/><path stroke="#ccc" d="M2 3.500h1M3 4.500h1"/><path stroke="#aaa" d="M3 3.500h1M1 4.500h1"/><path stroke="#5070b0" d="M2 4.500h1"/><path stroke="#ddd" d="M4 4.500h1"/><path stroke="#b07000" d="M3 5.500h1"/></svg>
  <svg class="name" viewBox="0 0 40 7"><path class="w" d="M2 2.500h1M2 3.500h1M4 3.500h1M4 4.500h1"/><path class="l" d="M1 2.500h1M1 3.500h1M9 3.500h1M14 2.500h2"/><path class="m" d="M5 3.500h1M12 2.500h1M12 3.500h1"/><path class="k" d="M7 3.500h1M11 3.500h1"/></svg>
</div>
<div class="app">
  <svg class="tile" viewBox="0 0 7 7"><rect fill="#008299" width="7" height="7"/><rect fill="#1a90a8" width="7" height="1"/><path stroke="#a8e0e0" d="M1 1.500h1"/><path stroke="#60b0b8" d="M2 1.500h1M2 3.500h1"/><path stroke="#90d0d0" d="M3 1.500h1M1 2.500h1M3 4.500h1"/><path stroke="#70b8b8" d="M2 2.500h1"/><path stroke="#b0e0e0" d="M3 2.500h1"/><path stroke="#30a0a8" d="M4 2.500h1"/><path stroke="#40a8b0" d="M5 2.500h1M1 4.500h1"/><path stroke="#80d0d0" d="M1 3.500h1M5 3.500h1"/><path stroke="#a0d8d8" d="M3 3.500h1M3 5.500h1"/><path stroke="#70c0c0" d="M4 3.500h1M2 4.500h1M4 4.500h1M5 4.500h1"/><path stroke="#90e0e0" d="M1 5.500h2"/><path stroke="#70b0b0" d="M4 5.500h1"/><path stroke="#50c8c8" d="M5 5.500h1"/><path stroke="#60c0c0" d="M3 6.500h1"/></svg>
  <svg class="name" viewBox="0 0 40 7"><path class="w" d="M4 4.500h1M6 3.500h1M14 3.500h1M18 4.500h1"/><path class="l" d="M1 3.500h1M1 4.500h1M2 4.500h1M3 4.500h1M9 4.500h1M17 3.500h1"/><path class="m" d="M3 3.500h1M5 3.500h1M7 3.500h1M6 4.500h1M12 4.500h1"/><path class="d" d="M5 4.500h1"/><path class="k" d="M7 4.500h1"/></svg>
</div>
<svg class="hd" viewBox="0 0 40 7"><path class="h2" d="M1 5.500h1M10 5.500h1"/><path class="h1" d="M2 5.500h1M5 5.500h1M7 5.500h1M12 5.500h2M7 6.500h1M10 6.500h1"/><path class="h4" d="M3 5.500h1"/><path class="h3" d="M0 6.500h1M5 6.500h1"/><path class="h2" d="M1 6.500h1"/></svg>
<div class="app">
  <svg class="tile" viewBox="0 0 7 7"><rect fill="#0a4ab0" width="7" height="7"/><path stroke="#2060b8" d="M6.5 0v7M0 6.500h6"/><path stroke="#a0b0e0" d="M3 .5h1"/><path stroke="#d8d8e8" d="M4 .5h1"/><path stroke="#0a6ac8" d="M1 1.500h1"/><path stroke="#20a0ff" d="M2 1.500h2"/><path stroke="#b0d8ff" d="M4 1.500h1"/><path stroke="#80a0e0" d="M0 2.500h1"/><path stroke="#40b0ff" d="M1 2.500h1"/><path stroke="#333" d="M2 2.500h2M2 3.500h2"/><path stroke="#fff" d="M4 2.500h1"/><path stroke="#80c0ff" d="M5 2.500h1M5 3.500h1"/><path stroke="#ccd" d="M0 3.500h1M4 5.500h1"/><path stroke="#1070ff" d="M1 3.500h1"/><path stroke="#e0f0ff" d="M4 3.500h1"/><path stroke="#0060f0" d="M1 4.500h1M4 4.500h1"/><path stroke="#90b8ff" d="M2 4.500h2"/><path stroke="#e0e8ff" d="M5 4.500h1"/><path stroke="#3a80ff" d="M2 5.500h2"/></svg>
  <svg class="name" viewBox="0 0 40 7"><path class="w" d="M5 2.500h1"/><path class="l" d="M11 2.500h1M15 2.500h1M15 3.500h1"/><path class="m" d="M1 2.500h1M1 3.500h1M4 3.500h1M13 2.500h1M13 3.500h1"/><path class="d" d="M14 3.500h1"/></svg>
</div>
<div class="app">
  <svg class="tile" viewBox="0 0 7 7"><rect fill="#5f5f5f" width="7" height="7"/><path stroke="#f0e8a0" d="M1 1.500h1"/><path stroke="#f8e890" d="M2 1.500h1M1 2.500h1M1 3.500h1"/><path stroke="#a09060" d="M3 1.500h1"/><path stroke="#d8c070" d="M2 2.500h1M2 3.500h1"/><path stroke="#f0e090" d="M3 2.500h1M3 3.500h1"/><path stroke="#f0d060" d="M1 4.500h1M1 5.500h1"/><path stroke="#c8b060" d="M2 4.500h1M2 5.500h1"/><path stroke="#e8d060" d="M3 4.500h1M3 5.500h1"/><path stroke="#a89060" d="M4 4.500h1M4 5.500h1"/></svg>
  <svg class="name" viewBox="0 0 40 7"><path class="w" d="M4 4.500h1M7 3.500h2M11 3.500h1M11 4.500h1M13 3.500h1M13 4.500h1M15 3.500h2"/><path class="l" d="M3 3.500h1"/><path class="m" d="M1 3.500h1M1 4.500h1M9 3.500h1M14 4.500h1M17 3.500h1M17 4.500h1"/><path class="d" d="M3 4.500h1M5 4.500h1M8 4.500h1"/><path class="k" d="M10 4.500h1"/></svg>
</div>
<div class="app">
  <svg class="tile" viewBox="0 0 7 7"><rect fill="#5f5f5f" width="7" height="7"/><path stroke="#eee" d="M1 1.500h3"/><path stroke="#ccc" d="M4 2.500h1"/><path stroke="#f8f8f8" d="M1 2.500h3M1 3.500h4M1 4.500h4M1 5.500h4"/></svg>
  <svg class="name" viewBox="0 0 40 7"><path class="w" d="M3 3.500h1M12 3.500h1M18 3.500h1"/><path class="m" d="M2 2.500h1M1 3.500h1M4 4.500h1M11 2.500h1M14 3.500h1"/><path class="d" d="M1 2.500h1M4 3.500h1"/><path class="k" d="M16 3.500h1"/></svg>
</div>
<div class="app">
  <svg class="tile" viewBox="0 0 7 7"><rect fill="#5f5f5f" width="7" height="6.700"/><path stroke="#fff" d="M1 1.500h3M1 2.500h4M1 3.500h4M1 4.500h4"/><path stroke="#ccc" d="M2 5.500h3"/><path stroke="#6d6d6d" d="M6 1v3"/></svg>
  <svg class="name" viewBox="0 0 40 7"><path class="w" d="M5 2.500h1M15 3.500h1"/><path class="m" d="M1 2.500h1M1 3.500h1M4 3.500h1M12 3.500h2"/><path class="d" d="M14 3.500h1"/></svg>
</div>
<div class="grp">McAfee</div>
<div class="app">
  <svg class="tile" viewBox="0 0 40 41"><rect fill="#aa1a3a" width="39" height="41"/><path fill="#801020" stroke="#d8d8d8" stroke-width="3" d="M6 7h26v15q0 10-13 15Q6 32 6 22z"/><path fill="#fff" d="M11 9h15v12H11z"/><path fill="#801020" d="M15 11h2l2 4 2-4h2v8h-2v-4l-2 3-2-3v4h-2z"/></svg>
  <span class="label">McAfee Encryption</span>
</div>
</section>
</main>

<div class="scrollbar">
  <svg class="sarrow" viewBox="0 0 8 12"><path d="M7 1L2 6l5 5"/></svg>
  <div class="thumb"></div>
  <div class="trail"><svg class="sarrow" viewBox="0 0 8 12"><path d="M1 1l5 5-5 5"/></svg></div>
  <div class="zoom"></div>
</div>

<div class="callout"></div>
<div class="edge"></div>
</div>
</body>
</html>
```
FILE: styles.css
```css
*{box-sizing:border-box}
html,body{margin:0;padding:0;background:#180052}
.page{position:relative;width:1809px;height:1150px;overflow:hidden;display:flex;flex-direction:column;background:#180052;font-family:"Open Sans","Noto Sans CJK JP",sans-serif}
.top{height:139px;flex:none;display:flex;justify-content:space-between;align-items:flex-start;padding:0 50px 0 115px}
.heading{display:flex;align-items:baseline;margin-top:39px}
.title{margin:0;font:300 54.5px/1.4 "Noto Sans CJK JP",sans-serif;color:#fff}
.sort{margin-left:14.5px;font:300 27px/1.4 "Noto Sans CJK JP",sans-serif;color:#7d6ca8}
.chev{width:18px;height:11px;margin-left:8px;fill:none;stroke:#7d6ca8;stroke-width:1.6}
.search{width:265px;height:32px;margin-top:64px;background:#311c63;display:flex;align-items:center;justify-content:flex-end;padding-right:7px}
.glass{width:16px;height:16px;fill:none;stroke:#e4dff0;stroke-width:1.6}
.columns{flex:1;display:grid;grid-template-columns:299px 293px 298px 346px 299px 234px;padding-left:120px}
.col{display:grid;grid-template-rows:46px 52px 46px 52px 52px 47px 52px 52px 47px 52px 46px 52px 52px 47px 52px 52px 51px 52px 52px 40px;justify-items:start}
.hd,.name{display:block;width:234px;height:41px;flex:none}
.app{display:flex;align-items:flex-start}
.tile{display:block;width:41px;height:41px;flex:none}
.tall{height:46px}
svg{overflow:hidden}
svg path:not([fill]){fill:none}
svg path{stroke-width:1;shape-rendering:crispEdges}
svg path[fill]{shape-rendering:auto}
.tile path[fill]{stroke-width:0}
.tile path[fill][stroke]{stroke-width:3}
.w{stroke:#fff}.l{stroke:#e0dce8}.m{stroke:#b9b1cf}.d{stroke:#7c6e9e}.k{stroke:#4c3a76}
.h1{stroke:#9566ff}.h2{stroke:#7b4fd8}.h3{stroke:#5a38b0}.h4{stroke:#3d2088}
.name path.f,.hd path.f{stroke-width:.5}
.shift{margin-left:-2px}
.shift-r{margin-left:12px}
svg path.ray{stroke:#fff;stroke-width:.2}
svg path.ray2{stroke:#cfe0fb;stroke-width:.35;stroke-dasharray:.5 .3}
.phone,.cup{stroke:#fff}
svg path.phone{stroke-width:.3;shape-rendering:auto}
svg path.cup{stroke-width:.45;shape-rendering:auto}
svg path.term{stroke:#ddd;stroke-width:2}
svg path.termg{stroke:#28d828;stroke-width:2}
.vhead{font:300 26px/1 "Open Sans",sans-serif;color:#7a52e4;padding-top:11px}
.selected{position:relative;width:280px;height:46px;margin:-9px 0 0 -3px;padding:2px 0 0 3px;background:#2e0a7c;align-items:center;z-index:1}
.vs{display:block;width:40px;height:40px;flex:none}
.vsname{margin-left:10px;font:400 14.3px/1 "Open Sans",sans-serif;color:#fff}
.upcell{height:40px}
.up{display:block;width:30px;height:30px;margin-top:-1px}
.up circle{fill:none;stroke:#fff;stroke-width:1.5}
.up path.arrow{fill:#fff;stroke:none;shape-rendering:auto}
.up path.stem{stroke:#fff;stroke-width:2}
.grp{font:400 12px/1 "Open Sans",sans-serif;color:#7b4fd8;padding-top:26px}
.label{margin-left:8px;font:400 14px/37px "Open Sans",sans-serif;color:#e8e4f0;white-space:nowrap}
.scrollbar{height:17px;flex:none;display:flex;align-items:stretch;background:#5b4a80}
.sarrow{width:8px;height:12px;align-self:center;fill:none}
.sarrow path{stroke:#2a2140;stroke-width:2;shape-rendering:auto}
.scrollbar>.sarrow{margin:0 9px 0 17px}
.thumb{width:658px;margin:1px 0;background:#cbcbcb}
.trail{flex:1;display:flex;align-items:center;justify-content:flex-end;padding-right:18px}
.zoom{width:18px;border-left:1px solid #180052;position:relative}
.zoom::after{content:"";position:absolute;left:3px;right:3px;top:7px;height:2px;background:#180052}
.callout{position:absolute;left:93px;top:977px;width:309px;height:135px;border:5px solid #ed1c24;z-index:2}
.edge{position:absolute;right:0;top:127px;width:2px;height:498px;background:#fff}
```
